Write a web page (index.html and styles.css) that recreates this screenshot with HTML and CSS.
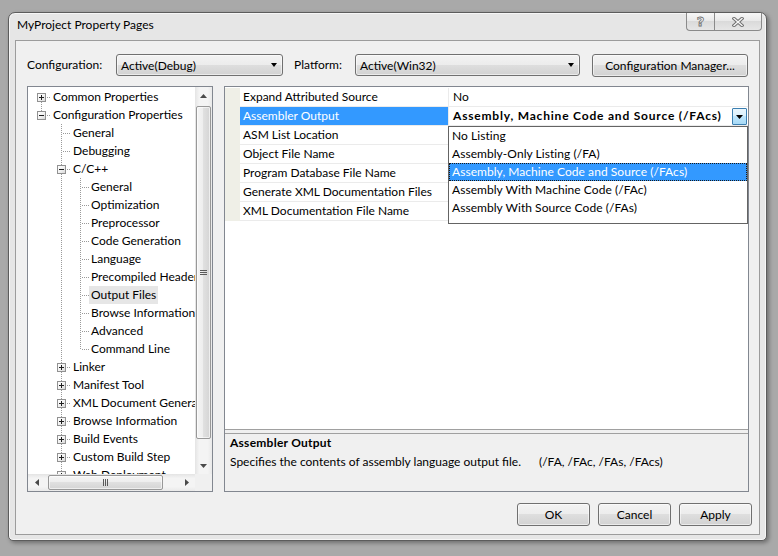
FILE: index.html
```html
<!DOCTYPE html>
<html>
<head>
<meta charset="utf-8">
<title>MyProject Property Pages</title>
<link rel="stylesheet" href="styles.css">
</head>
<body>
<div class="window">
  <div class="titlebar">
    <div class="title">MyProject Property Pages</div>
    <div class="capbtns">
      <div class="capbtn help">?</div>
      <div class="capbtn close">
        <svg width="12" height="10" viewBox="0 0 12 10"><path d="M2 1.5 L10 8.5 M10 1.5 L2 8.5" stroke="#6f6f6f" stroke-width="3.4" stroke-linecap="square"/><path d="M2 1.5 L10 8.5 M10 1.5 L2 8.5" stroke="#f6f6f6" stroke-width="1.4" stroke-linecap="square"/></svg>
      </div>
    </div>
  </div>
  <div class="client">
    <div class="toprow">
      <span class="lbl lbl1">Configuration:</span>
      <div class="combo c1"><span>Active(Debug)</span><i class="carrow"></i></div>
      <span class="lbl lbl2">Platform:</span>
      <div class="combo c2"><span>Active(Win32)</span><i class="carrow"></i></div>
      <div class="btn cm">Configuration Manager...</div>
    </div>
    <div class="main">
      <div class="tree">
        <div class="tc">
          <div class="tr"><span class="c bh"><i class="bx plus"></i></span><span class="lb">Common Properties</span></div>
          <div class="tr"><span class="c th"><i class="bx"></i></span><span class="lb">Configuration Properties</span></div>
          <div class="tr"><span class="c"></span><span class="c t"></span><span class="lb">General</span></div>
          <div class="tr"><span class="c"></span><span class="c t"></span><span class="lb">Debugging</span></div>
          <div class="tr"><span class="c"></span><span class="c t"><i class="bx"></i></span><span class="lb">C/C++</span></div>
          <div class="tr"><span class="c"></span><span class="c v"></span><span class="c n t"></span><span class="lb">General</span></div>
          <div class="tr"><span class="c"></span><span class="c v"></span><span class="c n t"></span><span class="lb">Optimization</span></div>
          <div class="tr"><span class="c"></span><span class="c v"></span><span class="c n t"></span><span class="lb">Preprocessor</span></div>
          <div class="tr"><span class="c"></span><span class="c v"></span><span class="c n t"></span><span class="lb">Code Generation</span></div>
          <div class="tr"><span class="c"></span><span class="c v"></span><span class="c n t"></span><span class="lb">Language</span></div>
          <div class="tr"><span class="c"></span><span class="c v"></span><span class="c n t"></span><span class="lb">Precompiled Headers</span></div>
          <div class="tr"><span class="c"></span><span class="c v"></span><span class="c n t"></span><span class="lb sel">Output Files</span></div>
          <div class="tr"><span class="c"></span><span class="c v"></span><span class="c n t"></span><span class="lb">Browse Information</span></div>
          <div class="tr"><span class="c"></span><span class="c v"></span><span class="c n t"></span><span class="lb">Advanced</span></div>
          <div class="tr"><span class="c"></span><span class="c v"></span><span class="c n th"></span><span class="lb">Command Line</span></div>
          <div class="tr"><span class="c"></span><span class="c t"><i class="bx plus"></i></span><span class="lb">Linker</span></div>
          <div class="tr"><span class="c"></span><span class="c t"><i class="bx plus"></i></span><span class="lb">Manifest Tool</span></div>
          <div class="tr"><span class="c"></span><span class="c t"><i class="bx plus"></i></span><span class="lb">XML Document Generator</span></div>
          <div class="tr"><span class="c"></span><span class="c t"><i class="bx plus"></i></span><span class="lb">Browse Information</span></div>
          <div class="tr"><span class="c"></span><span class="c t"><i class="bx plus"></i></span><span class="lb">Build Events</span></div>
          <div class="tr"><span class="c"></span><span class="c t"><i class="bx plus"></i></span><span class="lb">Custom Build Step</span></div>
          <div class="tr"><span class="c"></span><span class="c t"><i class="bx plus"></i></span><span class="lb">Web Deployment</span></div>
        </div>
        <div class="vs">
          <div class="sbb"><svg width="7" height="4" viewBox="0 0 7 4"><path d="M0 4 L3.5 0 L7 4 Z" fill="#4a4a4a"/></svg></div>
          <div class="vtrack"><div class="vthumb"><i class="grip-v"></i></div></div>
          <div class="sbb"><svg width="7" height="4" viewBox="0 0 7 4"><path d="M0 0 L3.5 4 L7 0 Z" fill="#4a4a4a"/></svg></div>
        </div>
        <div class="hs">
          <div class="sbb"><svg width="4" height="7" viewBox="0 0 4 7"><path d="M4 0 L0 3.5 L4 7 Z" fill="#4a4a4a"/></svg></div>
          <div class="htrack"><div class="hthumb"><i class="grip-h"></i></div></div>
          <div class="sbb"><svg width="4" height="7" viewBox="0 0 4 7"><path d="M0 0 L4 3.5 L0 7 Z" fill="#4a4a4a"/></svg></div>
        </div>
        <div class="corner"></div>
      </div>
      <div class="props">
        <div class="grid">
          <div class="prow"><span class="gut"></span><span class="pn">Expand Attributed Source</span><span class="pv">No</span></div>
          <div class="prow sel"><span class="gut"></span><span class="pn">Assembler Output</span><span class="pv"><b class="bv">Assembly, Machine Code and Source (/FAcs)</b>
            <span class="ddbtn"><svg width="7" height="4" viewBox="0 0 7 4"><path d="M0 0 L3.5 4 L7 0 Z" fill="#000"/></svg></span>
            <span class="list">
              <span class="li">No Listing</span>
              <span class="li">Assembly-Only Listing (/FA)</span>
              <span class="li on">Assembly, Machine Code and Source (/FAcs)</span>
              <span class="li">Assembly With Machine Code (/FAc)</span>
              <span class="li">Assembly With Source Code (/FAs)</span>
            </span>
          </span></div>
          <div class="prow"><span class="gut"></span><span class="pn">ASM List Location</span><span class="pv"></span></div>
          <div class="prow"><span class="gut"></span><span class="pn">Object File Name</span><span class="pv"></span></div>
          <div class="prow"><span class="gut"></span><span class="pn">Program Database File Name</span><span class="pv"></span></div>
          <div class="prow"><span class="gut"></span><span class="pn">Generate XML Documentation Files</span><span class="pv"></span></div>
          <div class="prow"><span class="gut"></span><span class="pn">XML Documentation File Name</span><span class="pv"></span></div>
        </div>
        <div class="split"></div>
        <div class="desc">
          <div class="dt">Assembler Output</div>
          <div class="dd">Specifies the contents of assembly language output file.<span class="sw">(/FA, /FAc, /FAs, /FAcs)</span></div>
        </div>
      </div>
    </div>
    <div class="buttons">
      <div class="btn db">OK</div>
      <div class="btn db">Cancel</div>
      <div class="btn db">Apply</div>
    </div>
  </div>
</div>
</body>
</html>
```
FILE: styles.css
```css
* { box-sizing: border-box; }
html, body { margin: 0; }
body {
  background: #a9a9a9;
  font-family: Lato, "Open Sans", sans-serif;
  font-size: 12px;
  color: #000;
  width: 778px;
  height: 556px;
  overflow: hidden;
}
.window {
  margin: 12px 0 0 8px;
  width: 759px;
  height: 529px;
  border: 1px solid #5c5c5c;
  border-radius: 7px 7px 5px 5px;
  background: #e6e6e6;
  box-shadow: inset 0 0 0 1px #f6f6f6, 2px 2px 4px rgba(0,0,0,.35);
  display: flex;
  flex-direction: column;
}
.titlebar { height: 27px; flex: none; display: flex; align-items: flex-start; }
.title { padding: 4px 0 0 8px; line-height: 16px; }
.capbtns { margin-left: auto; margin-right: 4px; display: flex; height: 18px; }
.capbtn {
  height: 18px;
  border: 1px solid #8a8a8a;
  border-top: none;
  background: linear-gradient(#f7f7f7, #e8e8e8 50%, #dadada 50%, #e6e6e6);
  display: flex; align-items: center; justify-content: center;
}
.help {
  width: 28px;
  border-radius: 0 0 0 4px;
  border-right: none;
  font-family: "DejaVu Sans", sans-serif;
  font-weight: 700;
  font-size: 13px;
  color: #f6f6f6;
  -webkit-text-stroke: 0.8px #6f6f6f;
}
.close { width: 48px; border-radius: 0 0 4px 0; }

.client {
  flex: 1;
  margin: 0 6px 5px 6px;
  border: 1px solid #9c9c9c;
  background: #f0f0f0;
  padding: 13px 0 8px 11px;
  display: flex;
  flex-direction: column;
}
.toprow { display: flex; align-items: flex-start; height: 23px; flex: none; }
.lbl { line-height: 22px; white-space: nowrap; }
.lbl1 { width: 89px; }
.lbl2 { width: 61px; margin-left: 11px; }
.btn, .combo {
  border: 1px solid #707070;
  border-radius: 3px;
  background: linear-gradient(#f3f3f3, #ececec 50%, #dedede 50%, #d2d2d2);
  box-shadow: inset 0 0 0 1px rgba(255,255,255,.55);
}
.combo { height: 22px; display: flex; align-items: center; padding-left: 4px; }
.combo span { flex: 1; white-space: nowrap; }
.c1 { width: 167px; }
.c2 { width: 225px; }
.carrow {
  width: 0; height: 0;
  border-left: 3.5px solid transparent;
  border-right: 3.5px solid transparent;
  border-top: 4px solid #000;
  margin-right: 5px;
}
.btn { display: flex; align-items: center; justify-content: center; white-space: nowrap; }
.cm { width: 156px; height: 23px; margin-left: 12px; }

.main { display: flex; height: 406px; margin-top: 9px; flex: none; }
.tree {
  width: 186px;
  border: 1px solid #828790;
  background: #fff;
  display: grid;
  grid-template-columns: minmax(0, 1fr) 17px;
  grid-template-rows: minmax(0, 1fr) 17px;
}
.tc { grid-column: 1; grid-row: 1; overflow: hidden; padding: 1px 0 0 3px; }
.tr { display: flex; height: 18px; white-space: nowrap; }
.lb { flex: none; padding: 0 2px; line-height: 18px; }
.lb.sel { background: #e6e6e6; }
.c { flex: none; width: 20px; height: 18px; position: relative; --x: 10px; }
.c.n { width: 18px; --x: 9px; }
.c.v {
  background: repeating-linear-gradient(to bottom, #9a9a9a 0 1px, transparent 1px 2px) var(--x) 0 / 1px 18px no-repeat;
}
.c.t {
  background:
    repeating-linear-gradient(to bottom, #9a9a9a 0 1px, transparent 1px 2px) var(--x) 0 / 1px 18px no-repeat,
    repeating-linear-gradient(to right, #9a9a9a 0 1px, transparent 1px 2px) calc(var(--x) + 2px) 9px / 10px 1px no-repeat;
}
.c.th {
  background:
    repeating-linear-gradient(to bottom, #9a9a9a 0 1px, transparent 1px 2px) var(--x) 0 / 1px 10px no-repeat,
    repeating-linear-gradient(to right, #9a9a9a 0 1px, transparent 1px 2px) calc(var(--x) + 2px) 9px / 10px 1px no-repeat;
}
.c.bh {
  background:
    repeating-linear-gradient(to bottom, #9a9a9a 0 1px, transparent 1px 2px) var(--x) 10px / 1px 8px no-repeat,
    repeating-linear-gradient(to right, #9a9a9a 0 1px, transparent 1px 2px) calc(var(--x) + 2px) 9px / 10px 1px no-repeat;
}
.bx {
  position: absolute;
  left: 6px; top: 5px;
  width: 9px; height: 9px;
  border: 1px solid #919191;
  background: linear-gradient(135deg, #ffffff, #f2f2f2 50%, #d9d9d9);
}
.bx::before {
  content: ""; position: absolute; left: 1px; top: 3px; width: 5px; height: 1px; background: #1f1f1f;
}
.bx.plus::after {
  content: ""; position: absolute; left: 3px; top: 1px; width: 1px; height: 5px; background: #1f1f1f;
}

.vs {
  grid-column: 2; grid-row: 1;
  display: flex; flex-direction: column;
  background: linear-gradient(to right, #e4e4e4, #f4f4f4 25%, #f4f4f4 75%, #e9e9e9);
}
.sbb { flex: none; width: 17px; height: 17px; display: flex; align-items: center; justify-content: center; }
.vtrack { flex: 1; }
.vthumb {
  margin: 2px 0 0 1px;
  width: 15px; height: 333px;
  border: 1px solid #989898;
  border-radius: 2px;
  background: linear-gradient(to right, #f5f5f5, #ededed 50%, #e0e0e0 50%, #d4d4d4);
  box-shadow: inset 0 0 0 1px rgba(255,255,255,.6);
  display: flex; align-items: center; justify-content: center;
}
.grip-v {
  width: 7px; height: 5px;
  background: repeating-linear-gradient(to bottom, #5a5a5a 0 1px, transparent 1px 2px);
}
.hs {
  grid-column: 1; grid-row: 2;
  display: flex;
  background: linear-gradient(#e4e4e4, #f4f4f4 25%, #f4f4f4 75%, #e9e9e9);
}
.htrack { flex: 1; }
.hthumb {
  margin: 1px 0 0 3px;
  width: 115px; height: 15px;
  border: 1px solid #989898;
  border-radius: 2px;
  background: linear-gradient(#f5f5f5, #ededed 50%, #e0e0e0 50%, #d4d4d4);
  box-shadow: inset 0 0 0 1px rgba(255,255,255,.6);
  display: flex; align-items: center; justify-content: center;
}
.grip-h {
  width: 5px; height: 7px;
  background: repeating-linear-gradient(to right, #5a5a5a 0 1px, transparent 1px 2px);
}
.corner { grid-column: 2; grid-row: 2; background: #f0f0f0; }

.props {
  width: 525px;
  margin-left: 11px;
  border: 1px solid #828790;
  background: #fff;
  display: flex; flex-direction: column;
}
.grid { height: 343px; flex: none; padding-top: 1px; border-bottom: 1px solid #a0a0a0; background: #fff; }
.prow { display: flex; height: 19px; line-height: 18px; white-space: nowrap; }
.gut { width: 15px; flex: none; background: #efefe7; }
.pn { width: 209px; flex: none; padding-left: 3px; border-bottom: 1px solid #ebebeb; border-right: 1px solid #ebebeb; }
.pv { flex: 1; padding-left: 4px; border-bottom: 1px solid #ebebeb; position: relative; }
.bv { letter-spacing: 0.8px; }
.prow.sel .pn { background: #3399ff; color: #fff; }
.ddbtn {
  position: absolute; right: 1px; top: 1px;
  width: 15px; height: 17px;
  border: 1px solid #3c7fb1;
  border-radius: 1px;
  background: linear-gradient(#eaf6fd, #d9f0fc 50%, #bee6fd 50%, #a7d9f5);
  display: flex; align-items: center; justify-content: center;
}
.list {
  position: absolute; left: -1px; top: 19px;
  width: 300px; height: 98px;
  border: 1px solid #646464;
  background: #fff;
  display: flex; flex-direction: column;
  z-index: 2;
}
.li { display: block; height: 18px; line-height: 18px; padding-left: 3px; letter-spacing: 0.05px; }
.li.on { background: #3399ff; color: #fff; outline: 1px dotted #1a1a1a; outline-offset: -1px; }
.split { height: 3px; flex: none; background: #f0f0f0; }
.desc { flex: 1; border-top: 1px solid #a0a0a0; background: #f0f0f0; padding: 1px 5px; }
.dt { font-weight: 700; line-height: 16px; letter-spacing: 0.25px; }
.dd { margin-top: 3px; line-height: 16px; white-space: nowrap; }
.sw { margin-left: 18px; }

.buttons { display: flex; justify-content: flex-end; gap: 8px; padding-right: 7px; margin-top: 11px; height: 23px; flex: none; }
.db { width: 73px; height: 23px; }
```
